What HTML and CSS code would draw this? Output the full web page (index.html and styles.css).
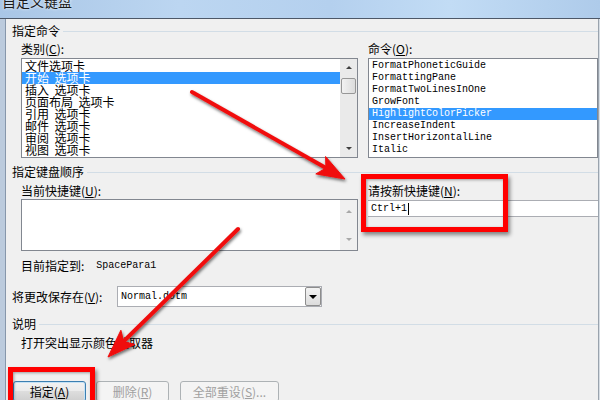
FILE: index.html
```html
<!DOCTYPE html>
<html>
<head>
<meta charset="utf-8">
<link rel="stylesheet" href="styles.css">
</head>
<body>
<div class="titlebar"><span class="title">自定义键盘</span></div>
<div class="frame">
  <div class="side-left"></div>
  <div class="main">
    <div class="group g1"><span>指定命令</span><i class="rule"></i></div>
    <div class="cols">
      <div class="col-left">
        <div class="label lbl-top">类别(<u>C</u>):</div>
        <div class="listbox">
          <div class="items cn">
            <div class="item">文件选项卡</div>
            <div class="item sel">开始&nbsp; 选项卡</div>
            <div class="item">插入&nbsp; 选项卡</div>
            <div class="item">页面布局&nbsp; 选项卡</div>
            <div class="item">引用&nbsp; 选项卡</div>
            <div class="item">邮件&nbsp; 选项卡</div>
            <div class="item">审阅&nbsp; 选项卡</div>
            <div class="item">视图&nbsp; 选项卡</div>
          </div>
          <div class="scrollbar">
            <div class="sb-btn"><i class="tri up"></i></div>
            <div class="sb-track"><div class="thumb"></div></div>
            <div class="sb-btn"><i class="tri down"></i></div>
          </div>
        </div>
      </div>
      <div class="col-right">
        <div class="label lbl-top">命令(<u>O</u>):</div>
        <div class="listbox">
          <div class="items mono">
            <div class="item">FormatPhoneticGuide</div>
            <div class="item">FormattingPane</div>
            <div class="item">FormatTwoLinesInOne</div>
            <div class="item">GrowFont</div>
            <div class="item sel full">HighlightColorPicker</div>
            <div class="item">IncreaseIndent</div>
            <div class="item">InsertHorizontalLine</div>
            <div class="item">Italic</div>
          </div>
        </div>
      </div>
    </div>

    <div class="group g2"><span>指定键盘顺序</span><i class="rule"></i></div>
    <div class="cols cols2">
      <div class="col-left">
        <div class="label">当前快捷键(<u>U</u>):</div>
        <div class="keybox">
          <div class="keybox-area"></div>
          <div class="scrollbar dis">
            <div class="sb-btn"><i class="tri up"></i></div>
            <div class="sb-track"></div>
            <div class="sb-btn"><i class="tri down"></i></div>
          </div>
        </div>
      </div>
      <div class="col-right">
        <div class="label">请按新快捷键(<u>N</u>):</div>
        <div class="textinput mono">Ctrl+1<i class="caret"></i></div>
      </div>
    </div>

    <div class="assigned"><span>目前指定到:</span><span class="mono">SpacePara1</span></div>

    <div class="saverow">
      <span class="save-label">将更改保存在(<u>V</u>):</span>
      <div class="combo">
        <span class="mono combo-text">Normal.dotm</span>
        <div class="combo-btn"><i class="tri down"></i></div>
      </div>
    </div>

    <div class="group g3"><span>说明</span><i class="rule"></i></div>
    <div class="desc">打开突出显示颜色选取器</div>

    <div class="buttons">
      <div class="btn default">指定(<u>A</u>)</div>
      <div class="btn disabled b2">删除(<u>R</u>)</div>
      <div class="btn disabled b3">全部重设(<u>S</u>)...</div>
    </div>
  </div>
  <div class="side-right"></div>
</div>

<div class="redbox rb1"></div>
<div class="redbox rb2"></div>

<svg class="arrows" width="600" height="400" viewBox="0 0 600 400">
  <defs>
    <filter id="sh" x="-20%" y="-20%" width="140%" height="140%">
      <feDropShadow dx="1" dy="2" stdDeviation="1.6" flood-color="#000" flood-opacity="0.55"/>
    </filter>
  </defs>
  <g filter="url(#sh)" fill="#f01010" stroke="#f01010">
    <line x1="192" y1="92" x2="326" y2="168" stroke-width="4" stroke-linecap="round"/>
    <polygon points="345,179 315.8,173.9 325.9,168.1 325.6,156.5" stroke-width="1" stroke-linejoin="round"/>
    <line x1="238" y1="229" x2="124" y2="341" stroke-width="4" stroke-linecap="round"/>
    <polygon points="108,357 120.9,330.2 123.6,341.5 134.9,344.4" stroke-width="1" stroke-linejoin="round"/>
  </g>
</svg>
</body>
</html>
```
FILE: styles.css
```css
* { box-sizing: border-box; }
body {
  margin: 0;
  width: 600px;
  height: 400px;
  overflow: hidden;
  position: relative;
  background: #f0f0f0;
  font-family: "Noto Sans CJK SC", sans-serif;
  font-size: 12px;
  line-height: 14px;
  color: #000;
}
u { text-decoration: underline; text-underline-offset: 1px; }
.mono { font-family: "Liberation Mono", monospace; font-size: 10px; }

.titlebar {
  height: 19px;
  background: linear-gradient(90deg, #a9c6e6 0%, #bcd6f1 30%, #b4d0ee 55%, #c2dcf5 75%, #aecbea 100%);
  border-bottom: 1px solid #4d5868;
  overflow: hidden;
}
.title {
  display: block;
  font-size: 14px;
  line-height: 14px;
  margin-top: -6px;
  padding-left: 2px;
  color: #1a1a1a;
  text-shadow: 0 0 3px #fff;
}

.frame { display: flex; height: 381px; }
.side-left { width: 6px; background: #bccbdd; border-right: 1px solid #8797ab; }
.main { width: 592px; }
.side-right { width: 2px; background: #d6dde4; border-left: 1px solid #9aa3ad; }

.group { display: flex; align-items: center; gap: 3px; padding-left: 6px; height: 14px; }
.group .rule { flex: 1; height: 1px; background: #d2dde6; }
.g1 { margin-top: 5px; }
.g2 { margin-top: 7px; }
.g3 { margin-top: 10px; }

.cols { display: flex; gap: 10px; padding-left: 15px; }
.col-left { width: 337px; }
.col-right { width: 230px; }
.label { height: 14px; white-space: nowrap; }
.lbl-top { margin-top: 4px; }

.listbox {
  margin-top: 2px;
  height: 100px;
  border: 1px solid #828790;
  background: #fff;
  display: flex;
  overflow: hidden;
}
.items { flex: 1; padding-top: 1px; }
.item { height: 12px; line-height: 12px; padding-left: 3px; white-space: nowrap; }
.items.cn .item { font-size: 12px; }
.items.mono .item { padding-left: 3px; }
.item.sel { background: #3399ff; color: #fff; }

.scrollbar { width: 17px; display: flex; flex-direction: column; background: #eaeaea; }
.sb-btn { height: 17px; display: flex; align-items: center; justify-content: center; }
.sb-track { flex: 1; padding-top: 2px; }
.thumb {
  height: 16px;
  margin: 0 1px;
  border: 1px solid #979797;
  border-radius: 2px;
  background: linear-gradient(90deg, #f2f2f2, #dcdcdc);
}
.tri { width: 0; height: 0; border-left: 3px solid transparent; border-right: 3px solid transparent; display: block; }
.tri.up { border-bottom: 3px solid #3f3f3f; }
.tri.down { border-top: 3px solid #3f3f3f; }
.scrollbar.dis { background: #f0f0f0; }
.scrollbar.dis .tri.up { border-bottom-color: #a8a8a8; }
.scrollbar.dis .tri.down { border-top-color: #a8a8a8; }
.scrollbar.dis .sb-btn { height: 22px; }

.cols2 { margin-top: 5px; }
.keybox {
  margin-top: 1px;
  height: 52px;
  border: 1px solid #828790;
  display: flex;
  background: #fff;
}
.keybox-area { flex: 1; }
.textinput {
  margin-top: 2px;
  height: 17px;
  background: #fff;
  border-top: 1px solid #abadb3;
  border-bottom: 1px solid #abadb3;
  padding-left: 3px;
  line-height: 15px;
  display: flex;
  align-items: center;
}
.caret { display: inline-block; width: 1px; height: 12px; background: #000; margin-left: 1px; }

.assigned { margin-top: 8px; padding-left: 15px; height: 14px; display: flex; gap: 12px; align-items: center; }

.saverow { margin-top: 13px; display: flex; align-items: center; padding-left: 6px; height: 21px; }
.save-label { width: 105px; white-space: nowrap; }
.combo {
  width: 205px;
  height: 21px;
  border: 1px solid #abadb3;
  background: #fff;
  display: flex;
  align-items: center;
  justify-content: space-between;
}
.combo-text { padding-left: 3px; }
.combo-btn {
  width: 16px;
  height: 19px;
  border: 1px solid #8d8d8d;
  border-radius: 2px;
  background: linear-gradient(180deg, #f3f3f3, #dcdcdc);
  display: flex;
  align-items: center;
  justify-content: center;
}
.combo-btn .tri.down { border-left-width: 4px; border-right-width: 4px; border-top: 4px solid #000; }

.desc { margin-top: 5px; padding-left: 15px; height: 14px; }

.buttons { margin-top: 31px; padding-left: 7px; display: flex; }
.btn {
  height: 21px;
  width: 73px;
  border-radius: 3px;
  display: flex;
  align-items: center;
  justify-content: center;
  white-space: nowrap;
}
.btn.default {
  border: 1px solid #3c7fb1;
  background: linear-gradient(180deg, #f2f2f2 0%, #ebebeb 45%, #dddddd 50%, #cfcfcf 100%);
  box-shadow: inset 0 0 0 1px #c6e2f5;
}
.btn.disabled { border: 1px solid #adb2b5; background: #f4f4f4; color: #a0a0a0; }
.b2 { margin-left: 10px; }
.b3 { margin-left: 11px; width: 99px; }

.redbox {
  position: absolute;
  border: 5px solid #ff0000;
  box-shadow: 2px 3px 4px rgba(0,0,0,0.45), inset 1px 1px 3px rgba(0,0,0,0.35);
}
.rb1 { left: 361px; top: 174px; width: 147px; height: 58px; }
.rb2 { left: 8px; top: 367px; width: 87px; height: 45px; }

.arrows { position: absolute; left: 0; top: 0; }
```
